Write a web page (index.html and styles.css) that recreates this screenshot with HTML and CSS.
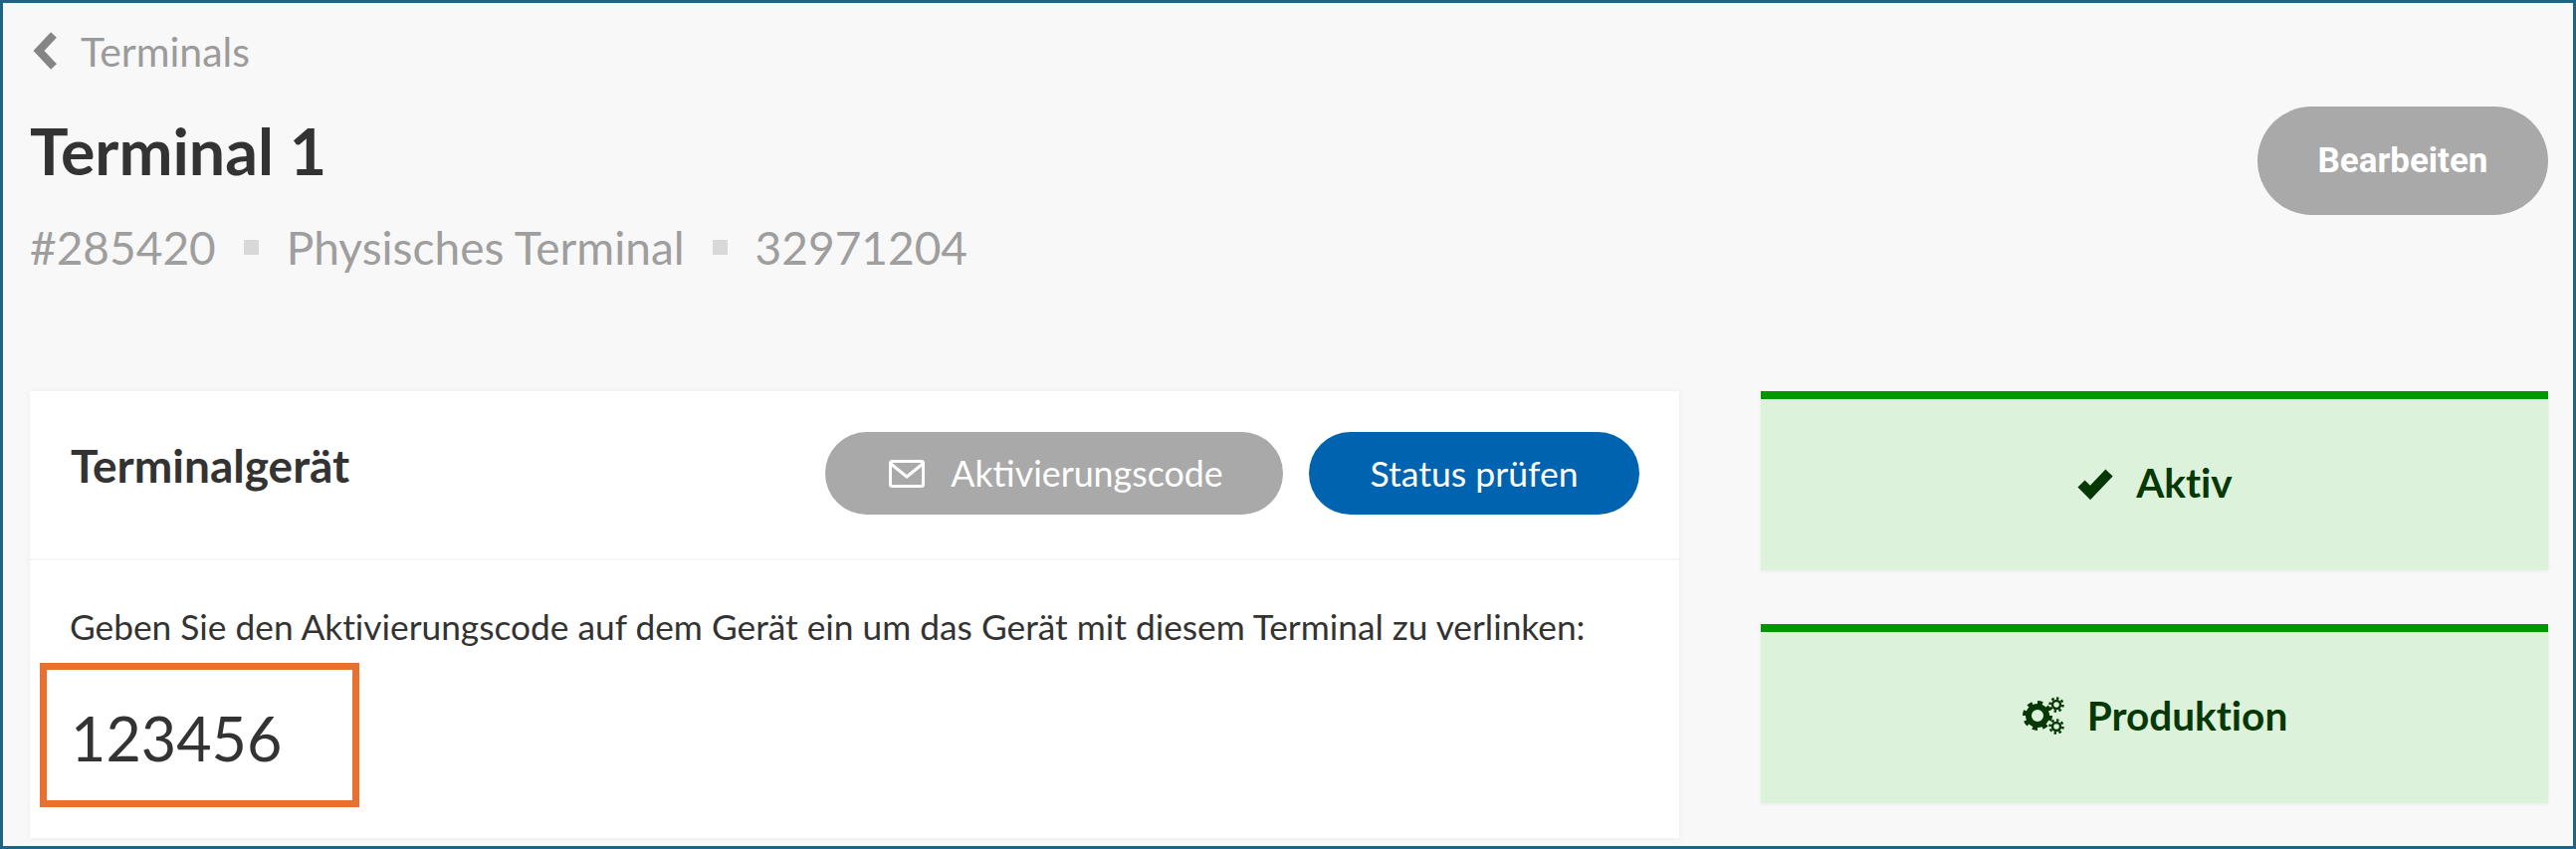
FILE: index.html
```html
<!DOCTYPE html>
<html lang="de">
<head>
    <meta charset="UTF-8">
    <title>Terminal 1</title>
    <link rel="stylesheet" href="styles.css">
</head>
<body>
    <div class="page">
        <div class="page-header">
            <div>
                <a class="back-link" href="#">
                    <svg class="back-icon" viewBox="0 0 26 38"><polyline points="21,3 6,19 21,35"/></svg>
                    <span>Terminals</span>
                </a>
                <h1>Terminal 1</h1>
                <div class="meta">
                    <span>#285420</span>
                    <i class="meta-dot"></i>
                    <span>Physisches Terminal</span>
                    <i class="meta-dot"></i>
                    <span>32971204</span>
                </div>
            </div>
            <button class="btn btn-edit">Bearbeiten</button>
        </div>

        <div class="content">
            <div class="card">
                <div class="card-head">
                    <h3>Terminalgerät</h3>
                    <div class="card-actions">
                        <button class="btn btn-grey">
                            <svg class="mail-icon" viewBox="0 0 36 28"><rect x="1.5" y="1.5" width="33" height="25" rx="2"/><polyline points="2,4 18,17 34,4"/></svg>
                            Aktivierungscode
                        </button>
                        <button class="btn btn-blue">Status prüfen</button>
                    </div>
                </div>
                <div class="card-body">
                    <p>Geben Sie den Aktivierungscode auf dem Gerät ein um das Gerät mit diesem Terminal zu verlinken:</p>
                    <div class="code">123456</div>
                </div>
            </div>

            <div class="side">
                <div class="status">
                    <svg class="check-icon" viewBox="0 0 38 34"><polyline points="5,18 14,27 33,7"/></svg>
                    <span>Aktiv</span>
                </div>
                <div class="status">
                    <svg class="cogs-icon" viewBox="0 0 44 40">
                        <circle class="cog-ring" cx="16" cy="20" r="9"/>
                        <circle class="cog-teeth" cx="16" cy="20" r="13" pathLength="48"/>
                        <circle class="cog-small" cx="35" cy="9" r="4"/>
                        <circle class="cog-small-teeth" cx="35" cy="9" r="6.5" pathLength="32"/>
                        <circle class="cog-small" cx="35" cy="31" r="4"/>
                        <circle class="cog-small-teeth" cx="35" cy="31" r="6.5" pathLength="32"/>
                    </svg>
                    <span>Produktion</span>
                </div>
            </div>
        </div>
    </div>
</body>
</html>
```

FILE: styles.css
```css
* {
    box-sizing: border-box;
}

body {
    margin: 0;
    font-family: Lato, "Noto Sans", sans-serif;
    font-variant-ligatures: none;
    color: #333;
}

.page {
    height: 853px;
    border: 3px solid #1d6486;
    background-color: #f8f8f8;
    padding: 30px 25px 0 27px;
    overflow: hidden;
}

.page-header {
    display: flex;
    justify-content: space-between;
    align-items: flex-start;
}

.back-link {
    display: flex;
    align-items: center;
    gap: 22px;
    height: 36px;
    font-size: 41px;
    color: #9b9b9b;
    text-decoration: none;
}

.back-icon {
    width: 26px;
    height: 38px;
    margin-left: 3px;
    fill: none;
    stroke: #858585;
    stroke-width: 8;
}

h1 {
    margin: 52px 0 0;
    font-size: 64.5px;
    line-height: 60px;
    font-weight: 700;
}

.meta {
    display: flex;
    align-items: center;
    gap: 28px;
    height: 44px;
    margin-top: 45px;
    font-size: 46px;
    color: #9e9e9e;
}

.meta-dot {
    width: 15px;
    height: 15px;
    background-color: #d8d8d8;
}

.btn {
    display: flex;
    align-items: center;
    justify-content: center;
    border: none;
    border-radius: 60px;
    color: #fff;
    font-family: inherit;
}

.btn-edit {
    width: 292px;
    height: 109px;
    margin-top: 74px;
    background-color: #a9a9a9;
    font-family: Roboto, sans-serif;
    font-size: 35px;
    font-weight: 700;
}

.content {
    display: grid;
    grid-template-columns: 1657px 791px;
    gap: 82px;
    margin-top: 123px;
}

.card {
    height: 449px;
    background-color: #fff;
    box-shadow: 0 0 6px rgba(0, 0, 0, 0.06);
}

.card-head {
    display: flex;
    justify-content: space-between;
    align-items: flex-start;
    height: 170px;
    padding: 40px 40px 0 41px;
    border-bottom: 2px solid #f5f5f5;
}

.card-head h3 {
    margin: 0;
    font-size: 46px;
    line-height: 70px;
    font-weight: 700;
}

.card-actions {
    display: flex;
    gap: 26px;
    margin-top: 1px;
}

.btn-grey {
    gap: 26px;
    width: 460px;
    height: 83px;
    padding-left: 10px;
    background-color: #a9a9a9;
    font-size: 35.8px;
}

.btn-blue {
    width: 332px;
    height: 83px;
    background-color: #0063af;
    font-size: 35.6px;
}

.mail-icon {
    width: 36px;
    height: 28px;
    fill: none;
    stroke: #fff;
    stroke-width: 3;
}

.card-body {
    padding: 47px 0 0 10px;
}

.card-body p {
    margin: 0 0 0 30px;
    font-size: 35.3px;
    line-height: 40px;
    color: #333;
}

.code {
    width: 321px;
    height: 145px;
    margin-top: 16px;
    padding-left: 24px;
    border: 7px solid #e87131;
    font-size: 61px;
    line-height: 137px;
}

.side {
    display: flex;
    flex-direction: column;
    gap: 54px;
}

.status {
    display: flex;
    align-items: center;
    justify-content: center;
    gap: 22px;
    height: 180px;
    padding-bottom: 5px;
    border-top: 8px solid #009600;
    background-color: #dcf2da;
    box-shadow: 0 1px 4px rgba(0, 0, 0, 0.06);
    color: #063806;
    font-size: 40.5px;
    font-weight: 700;
}

.check-icon {
    width: 38px;
    height: 34px;
    fill: none;
    stroke: #063806;
    stroke-width: 10;
}

.cogs-icon {
    width: 44px;
    height: 40px;
    fill: none;
    stroke: #063806;
}

.cog-ring {
    stroke-width: 6;
}

.cog-teeth {
    stroke-width: 4;
    stroke-dasharray: 3 3;
}

.cog-small {
    stroke-width: 2.5;
}

.cog-small-teeth {
    stroke-width: 2.5;
    stroke-dasharray: 2 2;
}
```
